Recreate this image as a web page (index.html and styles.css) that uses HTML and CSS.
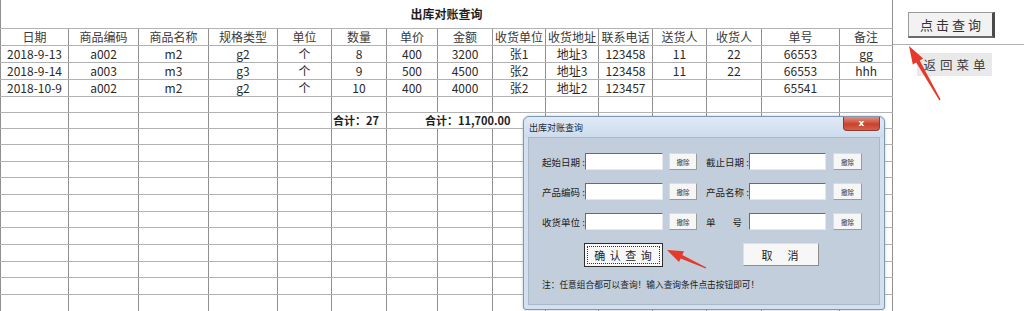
FILE: index.html
```html
<!DOCTYPE html>
<html lang="zh-CN">
<head>
  <meta charset="UTF-8" />
  <meta name="viewport" content="width=device-width, initial-scale=1.0"/>
  <title>出库对账查询</title>
  <link rel="stylesheet" href="styles.css">
</head>
<body>
  <div class="page">
    <table class="sheet">
      <colgroup>
        <col class="w68"><col class="w70"><col class="w70"><col class="w69"><col class="w54">
        <col class="w55"><col class="w51"><col class="w55"><col class="w53"><col class="w53">
        <col class="w54"><col class="w54"><col class="w55"><col class="w78"><col class="w53">
      </colgroup>
      <tr class="title-row"><td colspan="15">出库对账查询</td></tr>
      <tr class="head-row">
        <th>日期</th><th>商品编码</th><th>商品名称</th><th>规格类型</th><th>单位</th>
        <th>数量</th><th>单价</th><th>金额</th><th>收货单位</th><th>收货地址</th>
        <th>联系电话</th><th>送货人</th><th>收货人</th><th>单号</th><th>备注</th>
      </tr>
      <tr class="r17">
        <td>2018-9-13</td><td>a002</td><td>m2</td><td>g2</td><td>个</td>
        <td>8</td><td>400</td><td>3200</td><td>张1</td><td>地址3</td>
        <td>123458</td><td>11</td><td>22</td><td>66553</td><td>gg</td>
      </tr>
      <tr class="r17">
        <td>2018-9-14</td><td>a003</td><td>m3</td><td>g3</td><td>个</td>
        <td>9</td><td>500</td><td>4500</td><td>张2</td><td>地址3</td>
        <td>123458</td><td>11</td><td>22</td><td>66553</td><td>hhh</td>
      </tr>
      <tr class="r17">
        <td>2018-10-9</td><td>a002</td><td>m2</td><td>g2</td><td>个</td>
        <td>10</td><td>400</td><td>4000</td><td>张2</td><td>地址2</td>
        <td>123457</td><td></td><td></td><td>65541</td><td></td>
      </tr>
      <tr class="r16">
        <td></td><td></td><td></td><td></td><td></td><td></td><td></td><td></td>
        <td></td><td></td><td></td><td></td><td></td><td></td><td></td>
      </tr>
      <tr class="sum-row">
        <td></td><td></td><td></td><td></td><td></td>
        <td class="sum">合计：27</td>
        <td class="sum sum-money" colspan="3">合计：11,700.00</td>
        <td></td><td></td><td></td><td></td><td></td><td></td>
      </tr>
      <tr><td></td><td></td><td></td><td></td><td></td><td></td><td></td><td></td><td></td><td></td><td></td><td></td><td></td><td></td><td></td></tr>
      <tr><td></td><td></td><td></td><td></td><td></td><td></td><td></td><td></td><td></td><td></td><td></td><td></td><td></td><td></td><td></td></tr>
      <tr><td></td><td></td><td></td><td></td><td></td><td></td><td></td><td></td><td></td><td></td><td></td><td></td><td></td><td></td><td></td></tr>
      <tr><td></td><td></td><td></td><td></td><td></td><td></td><td></td><td></td><td></td><td></td><td></td><td></td><td></td><td></td><td></td></tr>
      <tr><td></td><td></td><td></td><td></td><td></td><td></td><td></td><td></td><td></td><td></td><td></td><td></td><td></td><td></td><td></td></tr>
      <tr><td></td><td></td><td></td><td></td><td></td><td></td><td></td><td></td><td></td><td></td><td></td><td></td><td></td><td></td><td></td></tr>
      <tr><td></td><td></td><td></td><td></td><td></td><td></td><td></td><td></td><td></td><td></td><td></td><td></td><td></td><td></td><td></td></tr>
      <tr><td></td><td></td><td></td><td></td><td></td><td></td><td></td><td></td><td></td><td></td><td></td><td></td><td></td><td></td><td></td></tr>
      <tr><td></td><td></td><td></td><td></td><td></td><td></td><td></td><td></td><td></td><td></td><td></td><td></td><td></td><td></td><td></td></tr>
      <tr><td></td><td></td><td></td><td></td><td></td><td></td><td></td><td></td><td></td><td></td><td></td><td></td><td></td><td></td><td></td></tr>
      <tr><td></td><td></td><td></td><td></td><td></td><td></td><td></td><td></td><td></td><td></td><td></td><td></td><td></td><td></td><td></td></tr>
    </table>

    <div class="side">
      <div class="side-top">
        <button class="btn-query">点击查询</button>
      </div>
      <button class="btn-menu">返回菜单</button>
    </div>

    <div class="dialog">
      <div class="dialog-title">
        <span class="dialog-caption">出库对账查询</span>
        <span class="dialog-close">x</span>
      </div>
      <div class="dialog-body">
        <div class="field-row">
          <label class="field-label">起始日期 :</label>
          <input class="field-input" type="text">
          <button class="clear-btn">撤除</button>
          <label class="field-label second">截止日期 :</label>
          <input class="field-input narrow" type="text">
          <button class="clear-btn last">撤除</button>
        </div>
        <div class="field-row">
          <label class="field-label">产品编码 :</label>
          <input class="field-input" type="text">
          <button class="clear-btn">撤除</button>
          <label class="field-label second">产品名称 :</label>
          <input class="field-input narrow" type="text">
          <button class="clear-btn last">撤除</button>
        </div>
        <div class="field-row">
          <label class="field-label">收货单位 :</label>
          <input class="field-input" type="text">
          <button class="clear-btn">撤除</button>
          <label class="field-label second spread"><span>单</span><span>号</span></label>
          <input class="field-input narrow" type="text">
          <button class="clear-btn last">撤除</button>
        </div>
        <div class="action-row">
          <button class="action-btn confirm"><span>确 认 查 询</span></button>
          <button class="action-btn cancel">取　消</button>
        </div>
        <p class="note">注：任意组合都可以查询！输入查询条件点击按钮即可！</p>
      </div>
    </div>

    <svg class="marks" width="1024" height="311" viewBox="0 0 1024 311">
      <polygon points="909,46 923.2,58.6 919.7,60.6 940.6,99.6 939.4,100.4 916.2,62.6 912.8,64.6" />
      <polygon points="667,250 684,251.3 682.3,254.9 706.3,267.4 705.7,268.6 680.7,258.5 679,262.1" />
    </svg>
  </div>
</body>
</html>
```

FILE: styles.css
```css
* {
  box-sizing: border-box;
}
body {
  margin: 0;
  background: #fff;
  font-family: "Noto Sans CJK SC", "Noto Sans", sans-serif;
  color: #2a2a2a;
}
.page {
  position: relative;
  display: flex;
  width: 1024px;
  height: 311px;
  overflow: hidden;
}

/* sheet */
.sheet {
  flex: none;
  width: 893px;
  border-collapse: collapse;
  table-layout: fixed;
  font-size: 12px;
}
.w51 { width: 51px; }
.w53 { width: 53px; }
.w54 { width: 54px; }
.w55 { width: 55px; }
.w68 { width: 68px; }
.w69 { width: 69px; }
.w70 { width: 70px; }
.w78 { width: 78px; }
.sheet tr {
  height: 16.67px;
}
.sheet td, .sheet th {
  padding: 0;
  border-top: 1px solid #b2b2b2;
  border-bottom: 1px solid #b2b2b2;
  border-left: 1px solid #909090;
  border-right: 1px solid #909090;
  font-weight: normal;
  text-align: center;
  line-height: 14px;
  white-space: nowrap;
  overflow: hidden;
}
.sheet th {
  color: #3a3a3a;
}
.sheet .title-row {
  height: 28px;
}
.sheet .title-row td {
  border-top: none;
  font-weight: bold;
  color: #1e1e1e;
}
.sheet .head-row {
  height: 17.5px;
}
.sheet .r17 {
  height: 17px;
}
.sheet .r16 {
  height: 16px;
}
.sheet .sum-row {
  height: 15.5px;
}
.sheet .sum {
  font-size: 11px;
  font-weight: bold;
  text-align: left;
  padding-left: 1px;
  color: #1e1e1e;
}
.sheet .sum-money {
  padding-left: 38px;
}

/* right side */
.side {
  flex: 1;
}
.side-top {
  height: 45px;
  padding: 12px 0 0 15px;
  border-bottom: 1px solid #b0b0b0;
}
.btn-query {
  display: block;
  width: 87px;
  height: 26px;
  padding: 0 0 0 3px;
  background: #f2f2f2;
  border: 1px solid #9a9a9a;
  border-right: 3px solid #4a4a4a;
  border-bottom: 2px solid #6a6a6a;
  font-family: inherit;
  font-size: 13px;
  letter-spacing: 3px;
  color: #333;
}
.btn-menu {
  display: block;
  margin: 8px 0 0 24px;
  width: 75px;
  height: 23px;
  padding: 0 0 0 4px;
  background: #e9e9e9;
  border: none;
  font-family: inherit;
  font-size: 12.5px;
  letter-spacing: 4px;
  color: #3c3c3c;
}

/* dialog */
.dialog {
  position: absolute;
  left: 523px;
  top: 116px;
  width: 362px;
  height: 194px;
  background: #d3e1ef;
  border: 1px solid #7f97b2;
  border-radius: 6px 6px 3px 3px;
  box-shadow: 0 0 3px rgba(80, 100, 130, 0.35);
}
.dialog-title {
  display: flex;
  justify-content: space-between;
  align-items: flex-start;
  height: 20px;
  padding-left: 5px;
  background: linear-gradient(#dfeaf6, #cddcec);
  border-radius: 6px 6px 0 0;
}
.dialog-caption {
  font-size: 9px;
  line-height: 21px;
  color: #1f2a36;
}
.dialog-close {
  width: 37px;
  height: 14px;
  margin-right: 4px;
  background: linear-gradient(#e2917f, #c9432f 55%, #d4604a);
  border: 1px solid #8d3b30;
  border-top: none;
  border-radius: 0 0 4px 4px;
  color: #fff;
  font-family: "DejaVu Sans", sans-serif;
  font-size: 9px;
  font-weight: bold;
  line-height: 12px;
  text-align: center;
}
.dialog-body {
  height: 168px;
  margin: 0 4px;
  padding: 15px 0 0 13px;
  background: #c2cedb;
  border: 1px solid #aab9c9;
}
.field-row {
  display: flex;
  align-items: center;
  height: 17px;
  margin-bottom: 13px;
}
.field-label {
  width: 43px;
  font-size: 9.5px;
  color: #222;
  white-space: nowrap;
}
.field-label.second {
  margin-left: 9px;
}
.field-label.spread {
  display: flex;
  justify-content: space-between;
  padding-right: 7px;
}
.field-input {
  width: 78px;
  height: 17px;
  padding: 0;
  background: #fff;
  border: 1px solid #e4e8ec;
  border-top-color: #6b6b6b;
  border-left-color: #6b6b6b;
}
.field-input.narrow {
  width: 77px;
}
.clear-btn {
  width: 28px;
  height: 17px;
  margin-left: 6px;
  padding: 0;
  background: #f6f6f6;
  border: 1px solid #dadada;
  border-right-color: #9a9a9a;
  border-bottom-color: #9a9a9a;
  font-family: inherit;
  font-size: 6.5px;
  color: #333;
}
.clear-btn.last {
  width: 29px;
  margin-left: 7px;
}
.action-row {
  display: flex;
  align-items: flex-start;
  margin-top: 6px;
  padding-left: 42px;
}
.action-btn {
  height: 23px;
  padding: 0;
  background: #f7f7f7;
  border: 1px solid #e0e0e0;
  border-right-color: #8c8c8c;
  border-bottom-color: #8c8c8c;
  font-family: inherit;
  font-size: 11px;
  color: #222;
}
.action-btn.confirm {
  width: 79px;
  height: 24px;
  padding: 2px;
  border: 1px solid #2e2e2e;
}
.action-btn.confirm span {
  display: block;
  height: 100%;
  line-height: 17px;
  border: 1px dotted #333;
  letter-spacing: 1px;
}
.action-btn.cancel {
  width: 76px;
  margin-left: 80px;
  letter-spacing: 2px;
}
.note {
  margin: 12px 0 0;
  font-size: 8.7px;
  line-height: 12px;
  color: #222;
}

/* red arrows over the screen */
.marks {
  position: absolute;
  left: 0;
  top: 0;
  pointer-events: none;
}
.marks polygon {
  fill: #e5392c;
}
```
